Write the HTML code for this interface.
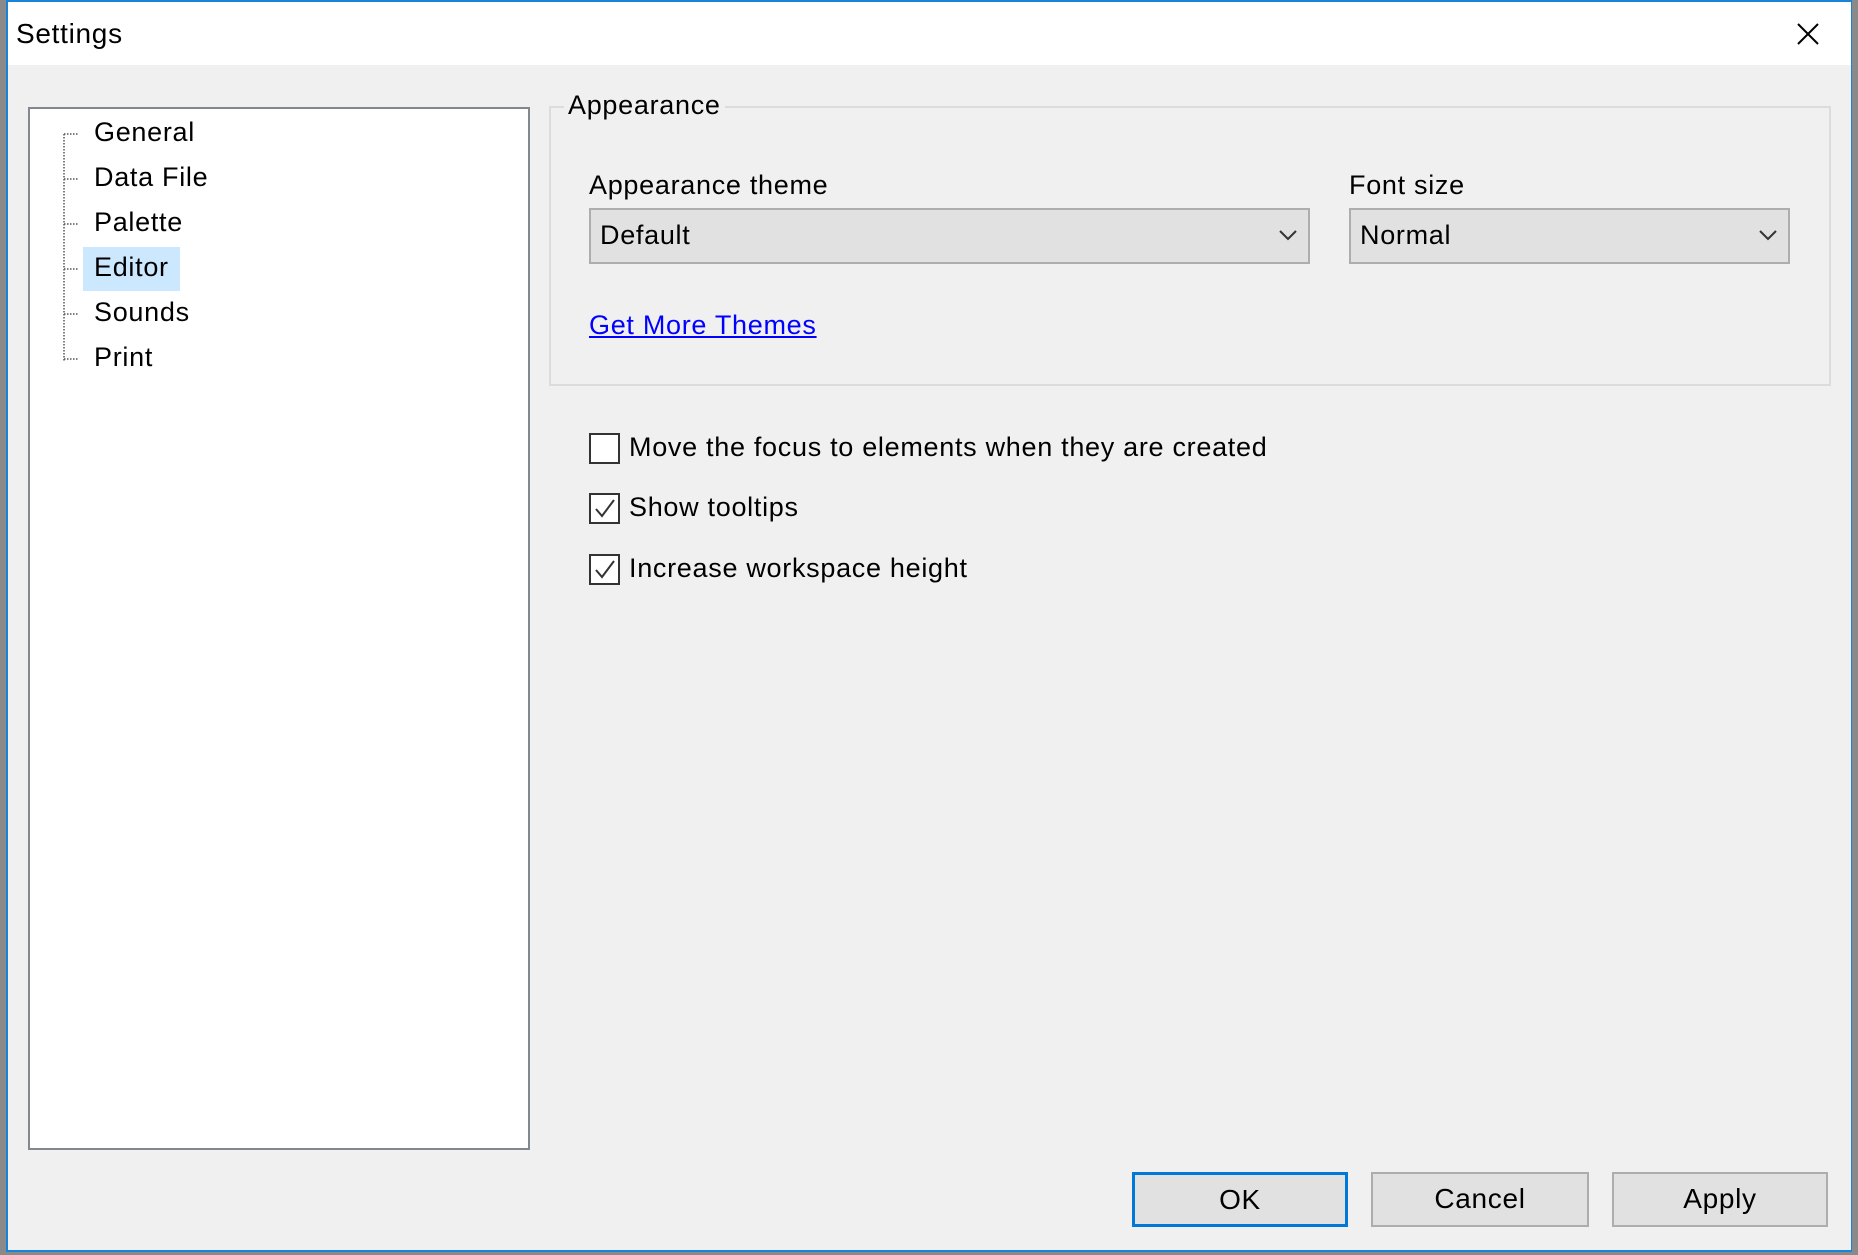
<!DOCTYPE html>
<html><head><style>
*{margin:0;padding:0;box-sizing:border-box}
body{width:1858px;height:1255px;background:#8a8a8a;position:relative;overflow:hidden;font-family:"Liberation Sans",sans-serif;color:#000}
.win{position:absolute;left:6px;top:0;width:1846px;height:1252px;background:#f0f0f0;border:2px solid #1883d7;border-right:1px solid #1883d7}
.title{position:absolute;left:0;top:0;right:0;height:63px;background:#fff}
.t{position:absolute;white-space:nowrap;font-size:27px;letter-spacing:0.7px}
.tree{position:absolute;left:20px;top:105px;width:502px;height:1043px;background:#fff;border:2px solid #828790}
.group{position:absolute;left:541px;top:104px;width:1282px;height:280px;border:2px solid #dcdcdc}
.combo{position:absolute;top:206px;height:56px;background:#e1e1e1;border:2px solid #adadad}
.cb{position:absolute;left:581px;width:31px;height:31px;border:2px solid #333;background:#fff}
.btn{position:absolute;top:1170px;height:55px;background:#e1e1e1;border:2px solid #adadad;font-size:28px;text-align:center;line-height:50px;letter-spacing:0.7px}
</style></head><body>
<div class="win">
<div class="title"><div class="t" style="left:8px;top:16px;font-size:28px">Settings</div>
<svg style="position:absolute;left:1788px;top:20px" width="24" height="24"><path d="M2 2L22 22M22 2L2 22" stroke="#000" stroke-width="2"/></svg></div>
<div class="tree">
<svg style="position:absolute;left:0;top:0" width="80" height="300"><path d="M34 25V253M34 25H48M34 70H48M34 115H48M34 160H48M34 205H48M34 250H48" stroke="#555" stroke-width="1.5" stroke-dasharray="1.5 1.5" fill="none"/></svg>
<div style="position:absolute;left:53px;top:138px;width:97px;height:44px;background:#cce8ff"></div>
<div class="t" style="left:64px;top:8px">General</div>
<div class="t" style="left:64px;top:53px">Data File</div>
<div class="t" style="left:64px;top:98px">Palette</div>
<div class="t" style="left:64px;top:143px">Editor</div>
<div class="t" style="left:64px;top:188px">Sounds</div>
<div class="t" style="left:64px;top:233px">Print</div>
</div>
<div class="group"></div>
<div class="t" style="left:556px;top:88px;background:#f0f0f0;padding:0 4px">Appearance</div>
<div class="t" style="left:581px;top:168px">Appearance theme</div>
<div class="combo" style="left:581px;width:721px"><div class="t" style="left:9px;top:10px">Default</div>
<svg style="position:absolute;right:10px;top:18px" width="20" height="14"><path d="M2 3L10 11L18 3" stroke="#333" stroke-width="2" fill="none"/></svg></div>
<div class="t" style="left:1341px;top:168px">Font size</div>
<div class="combo" style="left:1341px;width:441px"><div class="t" style="left:9px;top:10px">Normal</div>
<svg style="position:absolute;right:10px;top:18px" width="20" height="14"><path d="M2 3L10 11L18 3" stroke="#333" stroke-width="2" fill="none"/></svg></div>
<div class="t" style="left:581px;top:308px;color:#0000ff;text-decoration:underline">Get More Themes</div>
<div class="cb" style="top:431px"></div>
<div class="t" style="left:621px;top:430px">Move the focus to elements when they are created</div>
<div class="cb" style="top:491px"><svg width="27" height="27"><path d="M5 14L11 21L23 5" stroke="#333" stroke-width="2" fill="none"/></svg></div>
<div class="t" style="left:621px;top:490px">Show tooltips</div>
<div class="cb" style="top:552px"><svg width="27" height="27"><path d="M5 14L11 21L23 5" stroke="#333" stroke-width="2" fill="none"/></svg></div>
<div class="t" style="left:621px;top:551px">Increase workspace height</div>
<div class="btn" style="left:1124px;width:216px;border:3px solid #0078d7">OK</div>
<div class="btn" style="left:1363px;width:218px">Cancel</div>
<div class="btn" style="left:1604px;width:216px">Apply</div>
</div>
</body></html>
